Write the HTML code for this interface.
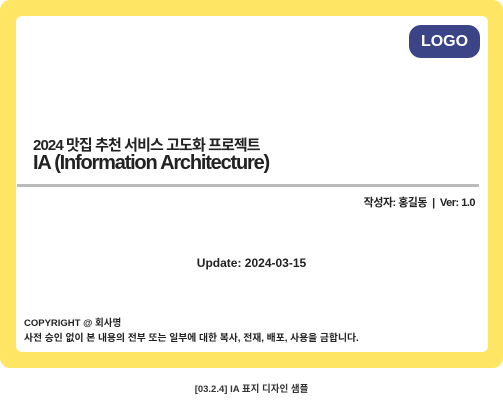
<!DOCTYPE html>
<html><head><meta charset="utf-8"><style>
html,body{margin:0;padding:0;width:503px;height:403px;background:#fff;overflow:hidden;font-family:"Liberation Sans","Noto Sans CJK KR",sans-serif;color:#222}
.frame{position:absolute;left:0;top:0;width:503px;height:368px;background:#ffe564;border-radius:10px}
.card{position:absolute;left:16px;top:16px;width:472px;height:336px;background:#fff;border-radius:6px}
.logo{position:absolute;left:409px;top:25px;width:71px;height:33px;background:#3a4486;border-radius:12px;color:#fff;font-weight:bold;font-size:16px;line-height:33px;text-align:center}
.t1{position:absolute;left:33px;top:134px;font-size:15px;font-weight:bold;letter-spacing:-0.9px;white-space:nowrap}
.t2{position:absolute;left:33px;top:152px;font-size:20px;font-weight:bold;letter-spacing:-1.2px;white-space:nowrap}
.line{position:absolute;left:17px;top:184px;width:462px;height:3px;background:#bbb}
.auth{position:absolute;right:28px;top:194px;font-size:11px;font-weight:bold;letter-spacing:-0.5px;white-space:nowrap}
.upd{position:absolute;left:0;width:503px;top:256px;text-align:center;font-size:12px;font-weight:bold}
.c1{position:absolute;left:24px;top:315px;font-size:9.5px;font-weight:bold}
.c2{position:absolute;left:24px;top:330px;font-size:9.8px;font-weight:bold;white-space:nowrap}
.cap{position:absolute;left:0;width:503px;top:381px;text-align:center;font-size:9.5px;font-weight:bold;color:#333}
</style></head><body>
<div class="frame"></div>
<div class="card"></div>
<div class="logo">LOGO</div>
<div class="t1">2024 맛집 추천 서비스 고도화 프로젝트</div>
<div class="t2">IA (Information Architecture)</div>
<div class="line"></div>
<div class="auth">작성자: 홍길동 &nbsp;|&nbsp; Ver: 1.0</div>
<div class="upd">Update: 2024-03-15</div>
<div class="c1">COPYRIGHT @ 회사명</div>
<div class="c2">사전 승인 없이 본 내용의 전부 또는 일부에 대한 복사, 전재, 배포, 사용을 금합니다.</div>
<div class="cap">[03.2.4] IA 표지 디자인 샘플</div>
</body></html>
